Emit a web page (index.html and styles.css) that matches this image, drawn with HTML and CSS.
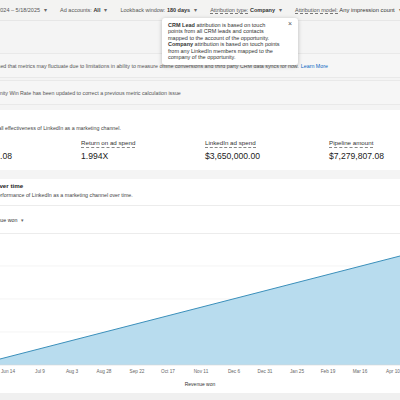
FILE: index.html
```html
<!DOCTYPE html>
<html lang="en">
<head>
    <meta charset="UTF-8">
    <meta name="viewport" content="width=device-width, initial-scale=1.0">
    <title>LinkedIn Revenue Attribution</title>
    <link rel="stylesheet" href="styles.css">
</head>
<body>
    <div class="page">
        <div class="filters">
            <span class="filter">5/19/2024 – 5/18/2025<i class="caret">▾</i></span>
            <span class="filter">Ad accounts: <b>All</b><i class="caret">▾</i></span>
            <span class="filter">Lookback window: <b>180 days</b><i class="caret">▾</i></span>
            <span class="filter"><span class="hint">Attribution type:</span> <b>Company</b><i class="caret">▾</i></span>
            <span class="filter"><span class="hint">Attribution model:</span> <b class="plain">Any impression count</b><i class="caret">▾</i></span>
        </div>

        <div class="notices">
            <div class="notice">Please be advised that metrics may fluctuate due to limitations in ability to measure offline conversions and third party CRM data syncs for now. <a href="#">Learn More</a></div>
            <div class="notice notice-update">The Opportunity Win Rate has been updated to correct a previous metric calculation issue</div>
        </div>

        <section class="card overview">
            <p class="card-sub">Measure the overall effectiveness of LinkedIn as a marketing channel.</p>
            <div class="metrics">
                <div class="metric">
                    <span class="metric-label">Revenue won</span>
                    <span class="metric-value">$7,279,807.08</span>
                </div>
                <div class="metric">
                    <span class="metric-label">Return on ad spend</span>
                    <span class="metric-value">1.994X</span>
                </div>
                <div class="metric">
                    <span class="metric-label">LinkedIn ad spend</span>
                    <span class="metric-value">$3,650,000.00</span>
                </div>
                <div class="metric">
                    <span class="metric-label">Pipeline amount</span>
                    <span class="metric-value">$7,279,807.08</span>
                </div>
            </div>
        </section>

        <section class="card trend">
            <h2 class="card-title">Revenue won over time</h2>
            <p class="card-sub">Understand the performance of LinkedIn as a marketing channel over time.</p>
            <div class="chart-tools">
                <span class="metric-select">Revenue won<i class="caret">▾</i></span>
            </div>
            <svg class="chart" width="400" height="144" viewBox="0 0 400 144">
                <line class="grid" x1="0" y1="32" x2="400" y2="32"/>
                <line class="grid" x1="0" y1="65" x2="400" y2="65"/>
                <line class="grid" x1="0" y1="98" x2="400" y2="98"/>
                <polygon class="area" points="0,125 400,22 400,131 0,131"/>
                <line class="trend-line" x1="0" y1="125" x2="400" y2="22"/>
                <line class="axis" x1="0" y1="131" x2="400" y2="131"/>
                <g class="ticks">
                    <text x="8" y="139">Jun 14</text>
                    <text x="40" y="139">Jul 9</text>
                    <text x="72" y="139">Aug 3</text>
                    <text x="104" y="139">Aug 28</text>
                    <text x="137" y="139">Sep 22</text>
                    <text x="168" y="139">Oct 17</text>
                    <text x="201" y="139">Nov 11</text>
                    <text x="234" y="139">Dec 6</text>
                    <text x="265" y="139">Dec 31</text>
                    <text x="297" y="139">Jan 25</text>
                    <text x="328" y="139">Feb 19</text>
                    <text x="360" y="139">Mar 16</text>
                    <text x="393" y="139">Apr 10</text>
                </g>
            </svg>
            <div class="legend">Revenue won</div>
        </section>
        <div class="footer-strip"></div>
    </div>

    <div class="tooltip">
        <span class="tooltip-close">×</span>
        <p>
            <span class="line"><b>CRM Lead</b> attribution is based on touch</span>
            <span class="line">points from all CRM leads and contacts</span>
            <span class="line">mapped to the account of the opportunity.</span>
            <span class="line"><b>Company</b> attribution is based on touch points</span>
            <span class="line">from any LinkedIn members mapped to the</span>
            <span class="line">company of the opportunity.</span>
        </p>
    </div>
</body>
</html>
```

FILE: styles.css
```css
body {
    margin: 0;
    width: 400px;
    height: 400px;
    overflow: hidden;
    background: #f4f4f4;
    font-family: "Liberation Sans", Arial, sans-serif;
    color: #2b2b2b;
    position: relative;
}
.page {
    margin-left: -55px;
    width: 520px;
}
.filters {
    height: 20px;
    display: flex;
    align-items: center;
    gap: 13px;
    padding-left: 40px;
    background: #f3f3f2;
    border-bottom: 1px solid #e6e6e6;
    font-size: 5.5px;
    color: #555;
    white-space: nowrap;
}
.filters b {
    color: #333;
    font-weight: 600;
}
.filters b.plain {
    font-weight: normal;
    font-size: 5.8px;
}
.caret {
    font-style: normal;
    margin-left: 4px;
    color: #666;
}
.hint {
    border-bottom: 0.5px dashed #777;
}
.notices {
    margin-top: 32px;
    font-size: 5.3px;
    color: #555;
    white-space: nowrap;
}
.notice {
    height: 23px;
    display: flex;
    align-items: center;
    padding-left: 18px;
    background: #f6f6f6;
    border-top: 1px solid #e9e9e9;
    border-bottom: 1px solid #e9e9e9;
}
.notice + .notice {
    margin-top: 2px;
}
.notice-update {
    padding-left: 25px;
}
.notice a {
    color: #0a66c2;
    text-decoration: none;
    margin-left: 2px;
}
.card {
    background: #fff;
    padding: 0 12px;
}
.overview {
    margin-top: 5px;
    padding-top: 14px;
    padding-bottom: 8px;
}
.card-sub {
    margin: 0;
    font-size: 5.3px;
    line-height: 8px;
    color: #444;
    white-space: nowrap;
}
.metrics {
    display: grid;
    grid-template-columns: repeat(4, 124px);
    margin-top: 7px;
}
.metric {
    display: flex;
    flex-direction: column;
    align-items: flex-start;
    gap: 3px;
}
.metric-label {
    font-size: 6.2px;
    line-height: 8px;
    color: #333;
    border-bottom: 0.5px dashed #888;
}
.metric-value {
    font-size: 8.6px;
    line-height: 11px;
    color: #222;
}
.trend {
    margin-top: 9px;
    padding-top: 3px;
    padding-bottom: 5px;
}
.card-title {
    margin: 0 0 0 -3px;
    font-size: 6.2px;
    line-height: 8px;
    font-weight: bold;
    color: #222;
}
.trend .card-sub {
    margin-top: 1px;
}
.chart-tools {
    margin: 6px -12px 0;
    padding-left: 40px;
    height: 27px;
    display: flex;
    align-items: center;
    border-top: 1px solid #ececec;
    border-bottom: 1px solid #ececec;
    font-size: 5.3px;
    color: #333;
}
.chart {
    display: block;
    margin-left: 43px;
}
.grid {
    stroke: #ececec;
    stroke-width: 0.6;
}
.axis {
    stroke: #d6d6d6;
    stroke-width: 0.6;
}
.area {
    fill: #b8dcee;
}
.trend-line {
    stroke: #3b8fba;
    stroke-width: 1;
}
.ticks text {
    font-size: 4.7px;
    fill: #666;
    text-anchor: middle;
}
.legend {
    margin-top: 2px;
    margin-left: 43px;
    width: 400px;
    text-align: center;
    font-size: 5px;
    line-height: 8px;
    color: #333;
}
.footer-strip {
    height: 20px;
    background: #f0f0f0;
}
.tooltip {
    position: absolute;
    left: 162px;
    top: 18px;
    width: 136px;
    box-sizing: border-box;
    padding: 4px 6px 5px 6px;
    background: #fff;
    border-radius: 3px;
    box-shadow: 0 1px 4px rgba(0, 0, 0, 0.25);
    font-size: 5.5px;
    line-height: 6.4px;
    color: #333;
}
.tooltip p {
    margin: 0;
}
.tooltip .line {
    display: block;
    white-space: nowrap;
}
.tooltip-close {
    position: absolute;
    right: 6px;
    top: 3px;
    font-size: 7px;
    color: #555;
}
```
